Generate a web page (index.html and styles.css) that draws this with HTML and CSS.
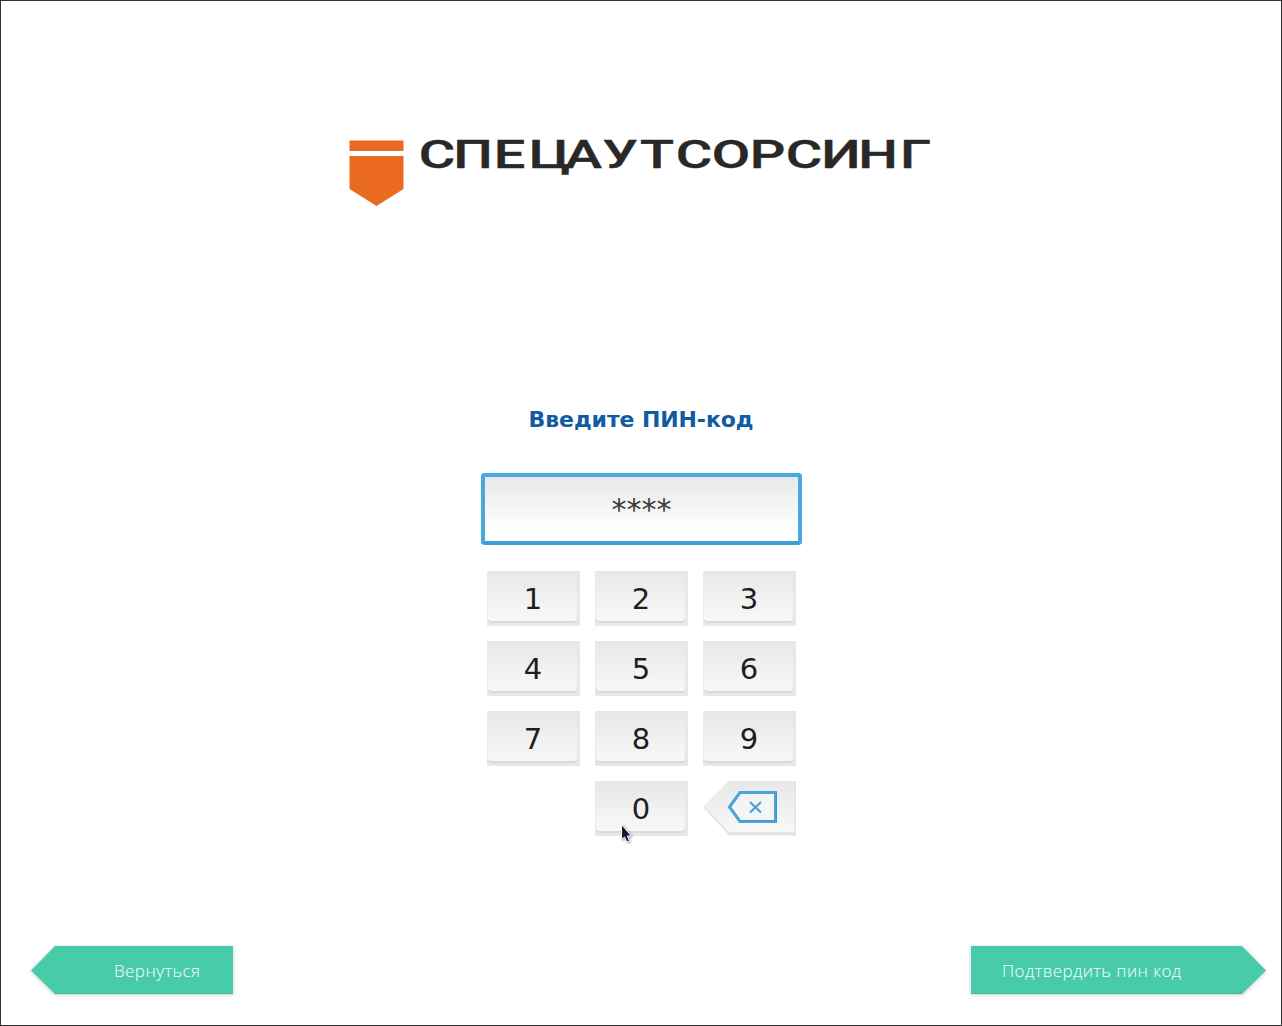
FILE: index.html
```html
<!DOCTYPE html>
<html lang="ru">
<head>
<meta charset="utf-8">
<title>Введите ПИН-код</title>
<link rel="stylesheet" href="styles.css">
</head>
<body>
<main class="screen">
  <header class="brand">
    <svg class="emblem" width="56" height="68" viewBox="0 0 56 68"><path d="M.5 1.500H54.500v10.500H.5zM.5 17H54.500v33L27.500 67 .5 50z"/></svg>
    <svg class="wordmark" width="516" height="60" viewBox="419 124 516 60" role="img">
      <text transform="scale(1.45 1)" y="167.700" x="301.400 326.200 351.400 379 402.400 427.600 453.100 478.600 504.100 529.400 554.500 580 605.500 631.400">СПЕЦАУТСОРСИНГ</text>
    </svg>
  </header>
  <h1 class="title">Введите ПИН-код</h1>
  <div class="field">****</div>
  <section class="keypad">
    <button class="key">1</button><button class="key">2</button><button class="key">3</button>
    <button class="key">4</button><button class="key">5</button><button class="key">6</button>
    <button class="key">7</button><button class="key">8</button><button class="key">9</button>
    <button class="key zero">0
      <svg class="cursor" width="16" height="22" viewBox="0 0 16 22"><path d="M1.500 .5v15l3-2.500 2.200 5 2.800-1.200-2.200-4.800h4z"/></svg>
    </button>
    <button class="erase" aria-label="Стереть">
      <svg width="93" height="55" viewBox="0 0 93 55">
        <defs><linearGradient id="g" x2="0" y2="1"><stop stop-color="#e8e8e8"/><stop offset="1" stop-color="#f8f8f8"/></linearGradient></defs>
        <path d="M0 26 26 0H93V54.500H26z" fill="#e4e4e4"/>
        <path d="M1 25 26 1H91.500V49Q91.500 51 89.500 51H26z" fill="url(#g)"/>
        <path d="M26.500 26 37 11.500H72.500V40.500H37z" fill="#f2f4f5" stroke="#4ba3d8" stroke-width="3"/>
        <path d="M38 39.500H72.500M73.500 11v30" stroke="#3f93c6" fill="none"/>
        <path d="m47 21 11 10.500M58 21 47 31.500" stroke="#4fa1cd" stroke-width="2.200" fill="none"/>
      </svg>
    </button>
  </section>
  <footer class="actions">
    <button class="action back">
      <svg width="202" height="48" viewBox="0 0 202 48"><path d="M0 24.500 24 0H202V48H24z"/><path class="edge" d="M24 47.500H202"/></svg>
      <span>Вернуться</span>
    </button>
    <button class="action confirm">
      <svg width="295" height="48" viewBox="0 0 295 48"><path d="M0 0H271L295 24.500 271 48H0z"/><path class="edge" d="M0 47.500H271"/></svg>
      <span>Подтвердить пин код</span>
    </button>
  </footer>
</main>
</body>
</html>
```
FILE: styles.css
```css
* { box-sizing: border-box; }
body { margin: 0; background: #fff; }
button { border: 0; padding: 0; background: none; }
svg { display: block; }

.screen {
  width: 1282px;
  height: 1026px;
  border: 1px solid #333;
  display: flex;
  flex-direction: column;
  align-items: center;
  padding: 138px 15px 31px 30px;
}

.brand { display: flex; gap: 14px; height: 68px; margin-right: 13px; }
.emblem { fill: #ea6a20; }
.wordmark { margin-top: -15px; }
.wordmark text {
  font: 500 38.5px Roboto, sans-serif;
  text-anchor: middle;
  fill: #292827;
  stroke: #292827;
  stroke-width: .4px;
}

.title {
  margin: 199px 15px 0 0;
  height: 28px;
  font: bold 22px/28px "DejaVu Sans", sans-serif;
  letter-spacing: -.1px;
  color: #105ca3;
  white-space: nowrap;
}

.field {
  width: 321px;
  height: 72px;
  margin: 39px 14px 0 0;
  border: 4px solid #48a9e1;
  border-bottom-color: #409fd8;
  border-radius: 4px;
  background: linear-gradient(#e8e8e8, #fff 85%);
  font: 30px/66px "DejaVu Sans", sans-serif;
  color: #3c3c3c;
  text-align: center;
}

.keypad {
  display: grid;
  grid-template-columns: repeat(3, 93px);
  grid-auto-rows: 55px;
  gap: 15px;
  margin: 26px 14px 0 0;
}
.key {
  position: relative;
  z-index: 0;
  padding: 2px 1px 0 0;
  background: #e8e8e8;
  font: 29px/53px "DejaVu Sans", sans-serif;
  color: #1e1e1e;
}
.key::before {
  content: "";
  position: absolute;
  z-index: -1;
  inset: 2px 3px 5px 1px;
  border-radius: 2px 2px 4px 4px;
  background: linear-gradient(#e8e8e8, #f8f8f8);
  box-shadow: 0 2px 1px #d9d9d9;
}
.zero { grid-column: 2; }
.cursor {
  position: absolute;
  left: 25px;
  top: 43px;
  fill: #171738;
  stroke: #fff;
  filter: drop-shadow(1px 1px 1px #0006);
}

.actions {
  width: 100%;
  margin-top: auto;
  display: flex;
  justify-content: space-between;
}
.action { display: grid; align-items: center; color: #fff; }
.action > * { grid-area: 1 / 1; }
.action svg { fill: #48cba8; filter: drop-shadow(0 1px 2px #0003); }
.action .edge { stroke: #43b797; }
.action span {
  z-index: 1;
  font: 300 17px/24px "Open Sans", sans-serif;
  letter-spacing: .42px;
  text-align: left;
  padding-top: 2px;
}
.back span { padding-left: 83px; }
.confirm span { padding-left: 31px; }
```
